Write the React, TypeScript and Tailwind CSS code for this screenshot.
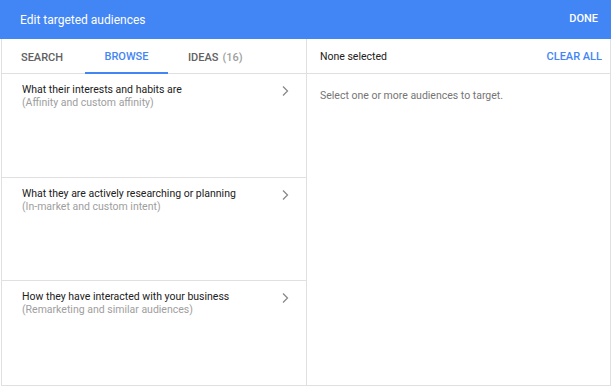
const rows = [
  { title: 'What their interests and habits are', sub: '(Affinity and custom affinity)' },
  { title: 'What they are actively researching or planning', sub: '(In-market and custom intent)' },
  { title: 'How they have interacted with your business', sub: '(Remarketing and similar audiences)' },
];

function Chevron() {
  return (
    <svg width="8" height="12" viewBox="0 0 8 12" className="shrink-0">
      <path d="M2 1.5 L6.5 6 L2 10.5" fill="none" stroke="#8a8a8a" strokeWidth="1.3" />
    </svg>
  );
}

export default function App() {
  return (
    <div className="w-[611px] bg-white" style={{ fontFamily: 'Roboto, "Liberation Sans", sans-serif' }}>
      {/* Header */}
      <div className="h-[39px] bg-[#4285f4] flex items-center justify-between pl-5 pr-[13px]">
        <span className="text-white text-[12px]">Edit targeted audiences</span>
        <span className="text-white text-[11px] font-medium">DONE</span>
      </div>

      <div className="ml-px w-[610px] h-[347px] border-x border-b border-[#e0e0e0] flex">
        {/* Left panel */}
        <div className="w-[305px] border-r border-[#e0e0e0] flex flex-col">
          <div className="h-[35px] border-b border-[#e0e0e0] flex text-[11px] font-medium">
            <div className="w-[83px] flex items-center pl-[19px] pt-1 text-[#616161]">SEARCH</div>
            <div className="w-[83px] flex items-center justify-center pt-1 text-[#4285f4] border-b-2 border-[#4285f4] mb-[-1px]">BROWSE</div>
            <div className="flex items-center pl-[20px] pt-1 text-[#616161]">
              IDEAS<span className="ml-1 text-[#9e9e9e]">(16)</span>
            </div>
          </div>
          {rows.map((r, i) => (
            <div
              key={i}
              className={`h-[104px] flex justify-between pl-5 pr-[17px] pt-[9px] ${i < 2 ? 'border-b border-[#e0e0e0]' : ''}`}
            >
              <div className="text-[10.5px] leading-[13px]">
                <div className="text-[#212121]">{r.title}</div>
                <div className="text-[#9e9e9e]">{r.sub}</div>
              </div>
              <div className="pt-[2px]">
                <Chevron />
              </div>
            </div>
          ))}
        </div>

        {/* Right panel */}
        <div className="flex-1 flex flex-col">
          <div className="h-[35px] border-b border-[#e0e0e0] flex items-center justify-between pl-[13px] pr-2 pt-[2px]">
            <span className="text-[10.5px] text-[#212121]">None selected</span>
            <span className="text-[11px] font-medium text-[#4285f4]">CLEAR ALL</span>
          </div>
          <div className="pl-[13px] pt-[14px] text-[10.5px] text-[#757575]">Select one or more audiences to target.</div>
        </div>
      </div>
    </div>
  );
}
